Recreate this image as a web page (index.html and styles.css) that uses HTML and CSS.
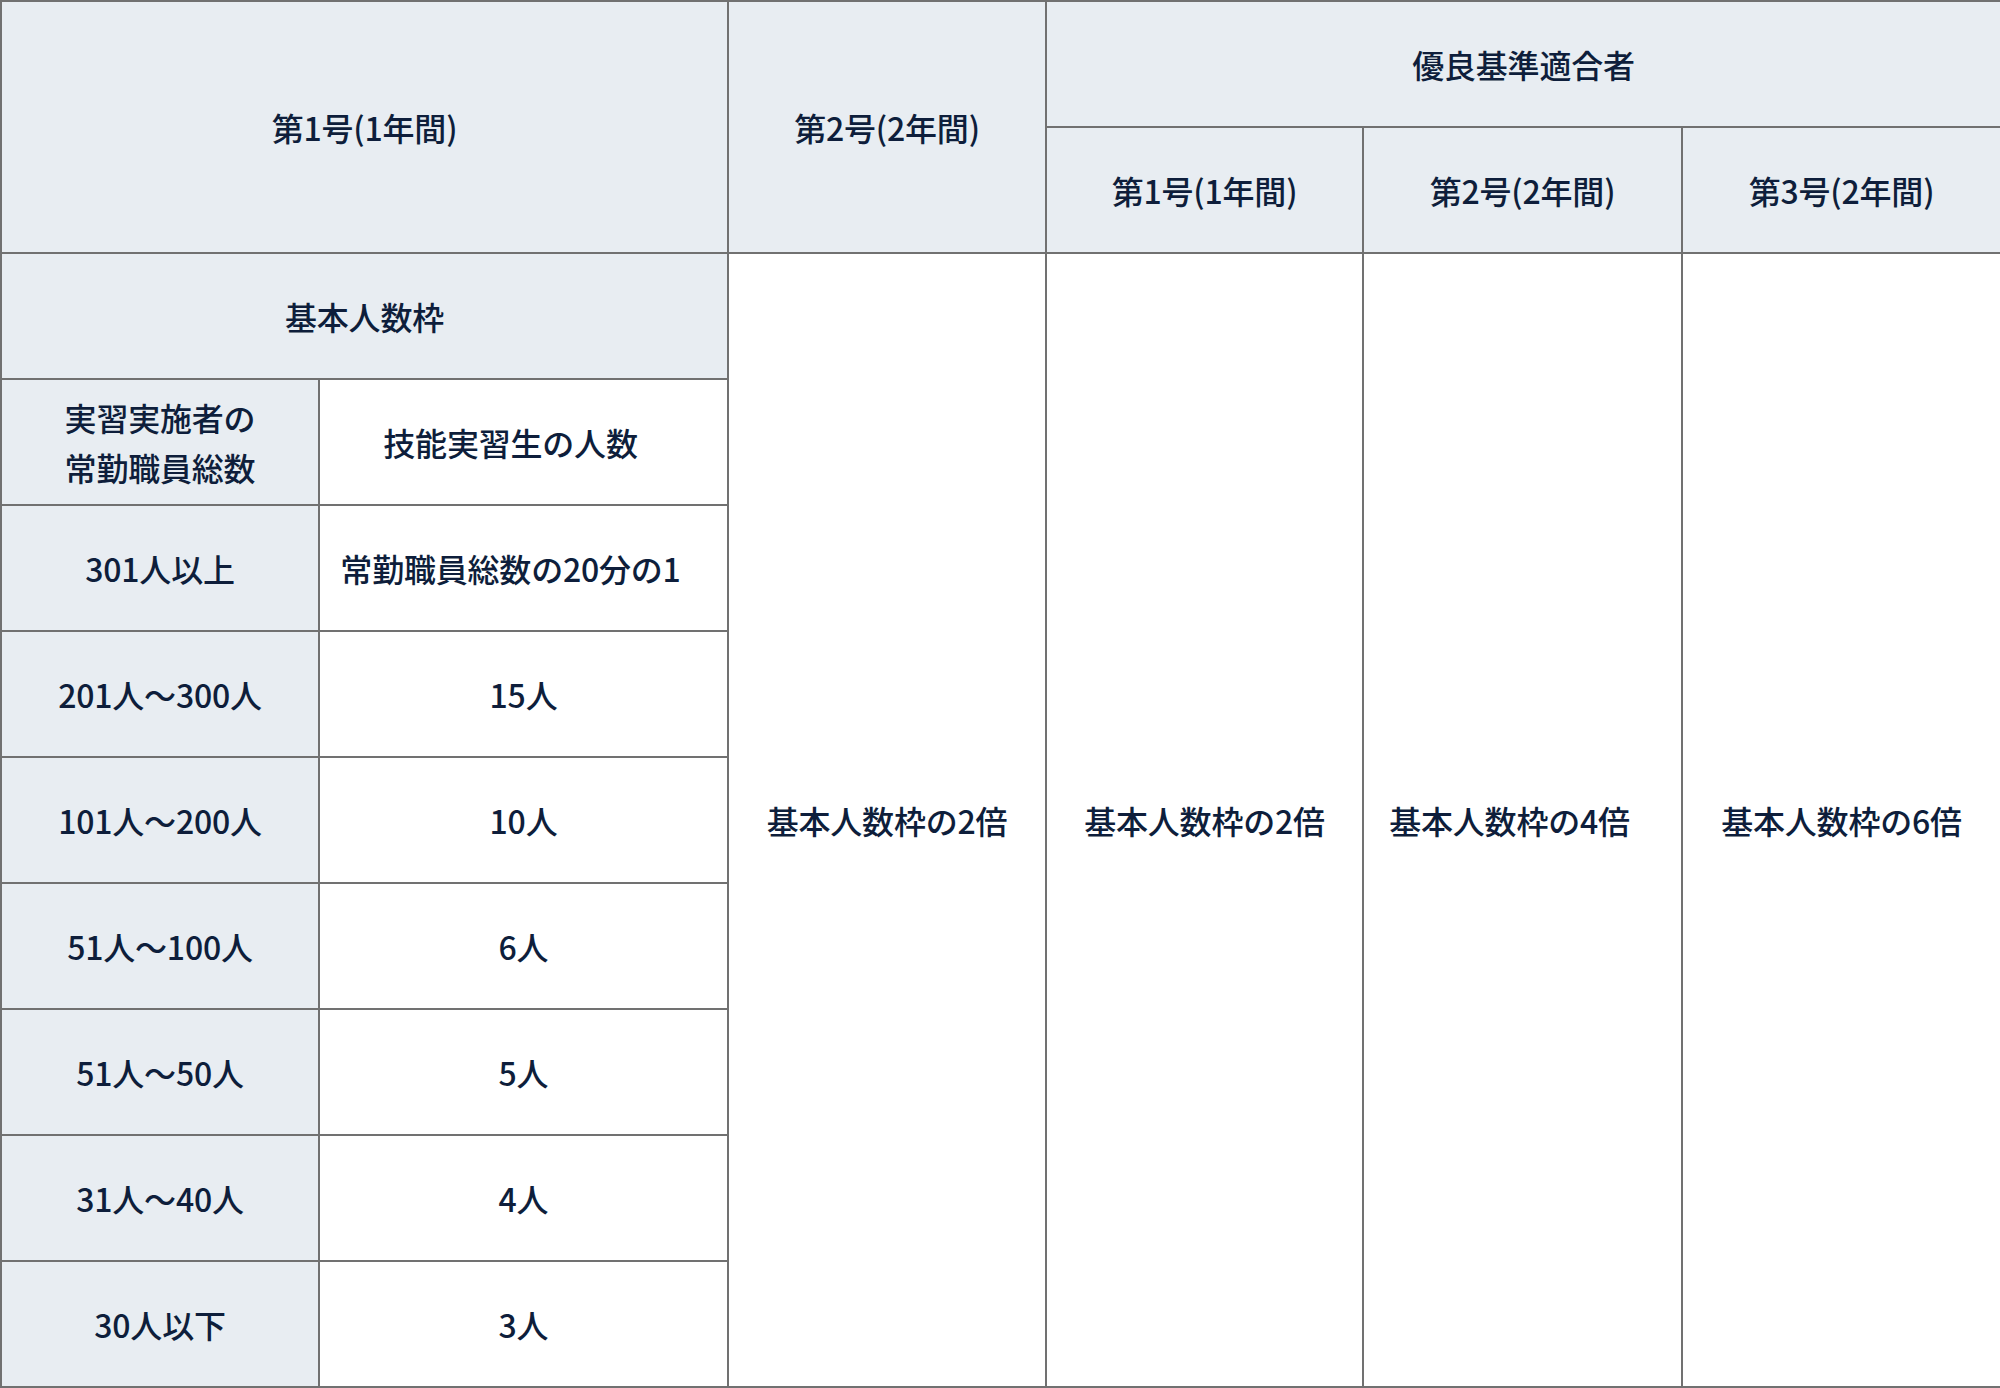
FILE: index.html
```html
<!DOCTYPE html>
<html lang="ja">
<head>
<meta charset="utf-8">
<title>技能実習生の人数枠</title>
<link rel="stylesheet" href="styles.css">
</head>
<body>
<table class="quota">
  <colgroup>
    <col class="c1"><col class="c2"><col class="c3"><col class="c4"><col class="c5"><col class="c6">
  </colgroup>
  <tr>
    <th class="hd" colspan="2" rowspan="2">第1号(1年間)</th>
    <th class="hd" rowspan="2">第2号(2年間)</th>
    <th class="hd" colspan="3">優良基準適合者</th>
  </tr>
  <tr>
    <th class="hd">第1号(1年間)</th>
    <th class="hd">第2号(2年間)</th>
    <th class="hd">第3号(2年間)</th>
  </tr>
  <tr>
    <th class="hd" colspan="2">基本人数枠</th>
    <td rowspan="9">基本人数枠の2倍</td>
    <td rowspan="9">基本人数枠の2倍</td>
    <td rowspan="9" class="shift">基本人数枠の4倍</td>
    <td rowspan="9">基本人数枠の6倍</td>
  </tr>
  <tr>
    <th class="hd">実習実施者の<br>常勤職員総数</th>
    <td class="shift">技能実習生の人数</td>
  </tr>
  <tr><th class="hd">301人以上</th><td class="shift">常勤職員総数の20分の1</td></tr>
  <tr><th class="hd">201人～300人</th><td>15人</td></tr>
  <tr><th class="hd">101人～200人</th><td>10人</td></tr>
  <tr><th class="hd">51人～100人</th><td>6人</td></tr>
  <tr><th class="hd">51人～50人</th><td>5人</td></tr>
  <tr><th class="hd">31人～40人</th><td>4人</td></tr>
  <tr><th class="hd">30人以下</th><td>3人</td></tr>
</table>
</body>
</html>
```
FILE: styles.css
```css
html, body {
  margin: 0;
  padding: 0;
  background: #ffffff;
}

.quota {
  width: 2000px;
  height: 1388px;
  table-layout: fixed;
  border-collapse: separate;
  border-spacing: 0;
  border-top: 2px solid #717171;
  border-left: 2px solid #717171;
  font-family: "Noto Sans CJK JP", "Noto Sans", sans-serif;
  font-size: 32px;
  line-height: 50px;
  color: #0e1e3b;
}

.c1 { width: 318px; }
.c2 { width: 409px; }
.c3 { width: 318px; }
.c4 { width: 317px; }
.c5 { width: 319px; }
.c6 { width: 319px; }

.quota tr {
  height: 126px;
}

.quota th,
.quota td {
  border-right: 2px solid #717171;
  border-bottom: 2px solid #717171;
  padding: 0;
  text-align: center;
  vertical-align: middle;
  font-weight: 500;
  letter-spacing: -0.2px;
  background: #ffffff;
}

.quota .hd {
  background: #e8edf2;
}

.quota .shift {
  padding-right: 26px;
}
```
